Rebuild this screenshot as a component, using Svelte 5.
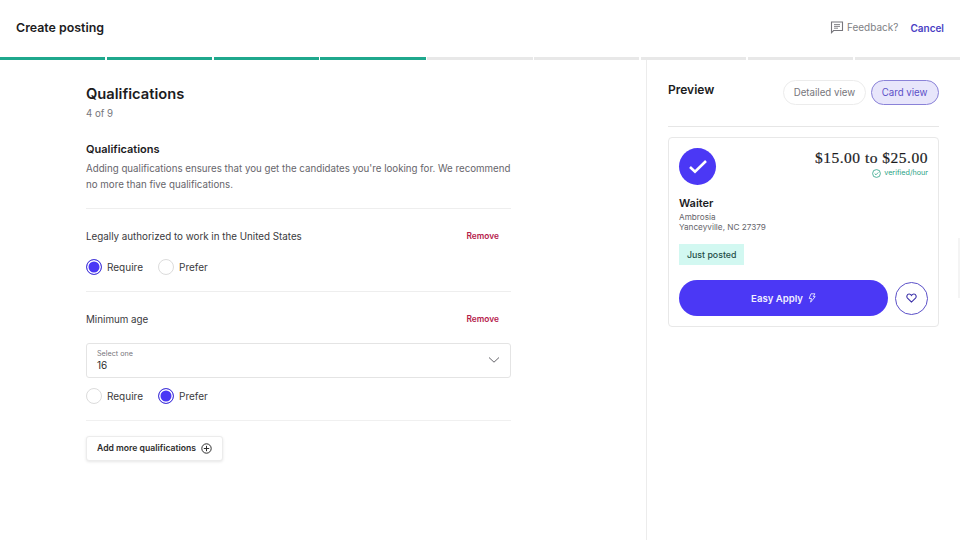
<script lang="ts">
  const segments = Array.from({ length: 9 }, (_, i) => i < 4);
</script>

<div class="page">
  <header class="topbar">
    <div class="title">Create posting</div>
    <div class="top-actions">
      <span class="feedback">
        <svg width="14" height="14" viewBox="0 0 14 14" fill="none" stroke="#77767c" stroke-width="1.1">
          <path d="M1.500 2h11v8.500H3.600L1.500 12.600z" />
          <path d="M4 4.600h6M4 6.400h6M4 8.200h4" stroke-width="0.9" />
        </svg>
        Feedback?
      </span>
      <span class="cancel">Cancel</span>
    </div>
  </header>

  <div class="progress">
    {#each segments as done}
      <div class="segment" class:done></div>
    {/each}
  </div>

  <div class="columns">
    <main class="form">
      <h1>Qualifications</h1>
      <div class="step">4 of 9</div>
      <h2>Qualifications</h2>
      <p class="intro">Adding qualifications ensures that you get the candidates you're looking for. We recommend no more than five qualifications.</p>

      <section class="qual first">
        <div class="qual-head">
          <span>Legally authorized to work in the United States</span>
          <span class="remove">Remove</span>
        </div>
        <div class="radios">
          <span class="radio-item"><span class="radio on"></span>Require</span>
          <span class="radio-item"><span class="radio"></span>Prefer</span>
        </div>
      </section>

      <section class="qual second">
        <div class="qual-head">
          <span>Minimum age</span>
          <span class="remove">Remove</span>
        </div>
        <div class="select">
          <div>
            <div class="select-label">Select one</div>
            <div class="select-value">16</div>
          </div>
          <svg width="12" height="12" viewBox="0 0 12 12" fill="none" stroke="#66656b" stroke-width="1">
            <path d="M1 3.500 6 8.200l5-4.700" />
          </svg>
        </div>
        <div class="radios">
          <span class="radio-item"><span class="radio"></span>Require</span>
          <span class="radio-item"><span class="radio on"></span>Prefer</span>
        </div>
      </section>

      <button class="add">
        Add more qualifications
        <svg width="11" height="11" viewBox="0 0 11 11" fill="none" stroke="#2d2d2d" stroke-width="1">
          <circle cx="5.500" cy="5.500" r="4.700" />
          <path d="M5.500 2.800v5.400M2.800 5.500h5.400" />
        </svg>
      </button>
    </main>

    <aside class="preview">
      <div class="preview-head">
        <div class="preview-title">Preview</div>
        <div class="views">
          <span class="view">Detailed view</span>
          <span class="view active">Card view</span>
        </div>
      </div>

      <div class="card">
        <div class="card-top">
          <div class="logo">
            <svg width="20" height="15" viewBox="0 0 20 15" fill="none" stroke="#fff" stroke-width="2.600">
              <path d="M2 8l5 4.600L18 2" />
            </svg>
          </div>
          <div class="pay">
            <div class="price">$15.00 to $25.00</div>
            <div class="verified">
              <svg width="9" height="9" viewBox="0 0 9 9" fill="none" stroke="#2aa285" stroke-width="0.800">
                <circle cx="4.500" cy="4.500" r="3.900" />
                <path d="M2.700 4.600l1.300 1.200 2.300-2.400" />
              </svg>
              verified/hour
            </div>
          </div>
        </div>
        <div class="job">Waiter</div>
        <div class="place">Ambrosia<br />Yanceyville, NC 27379</div>
        <div class="tag">Just posted</div>
        <div class="apply-row">
          <button class="apply">
            Easy Apply
            <svg width="8" height="10" viewBox="0 0 8 10" fill="none" stroke="#e8e6ff" stroke-width="0.900">
              <path d="M3 .8h4L5.200 3.600h2L2.600 9.200l.9-3.700H1.200z" />
            </svg>
          </button>
          <span class="save">
            <svg width="11" height="10" viewBox="0 0 11 10" fill="none" stroke="#3a2fa8" stroke-width="1.100">
              <path d="M5.500 9.100 1.500 5.200C.2 3.800.9 1 3.100 1c1.100 0 1.900.6 2.400 1.400C6 1.600 6.800 1 7.900 1c2.200 0 2.900 2.800 1.600 4.200z" />
            </svg>
          </span>
        </div>
      </div>
    </aside>
  </div>

  <div class="edge"></div>
</div>

<style>
  :global(body) {
    background: #fff;
  }

  .page {
    position: relative;
    width: 960px;
    height: 540px;
    overflow: hidden;
    font-family: Inter, "Liberation Sans", sans-serif;
    color: #2d2d2d;
    background: #fff;
  }

  .topbar {
    height: 57px;
    box-sizing: border-box;
    display: flex;
    justify-content: space-between;
    align-items: center;
    padding: 0 16px 2px;
  }

  .title {
    font-size: 12.400px;
    font-weight: 600;
    color: #1c1c1e;
  }

  .top-actions {
    display: flex;
    align-items: center;
    gap: 12px;
  }

  .feedback {
    display: flex;
    align-items: center;
    gap: 3px;
    margin-bottom: 1px;
    font-size: 10px;
    color: #807f85;
  }

  .cancel {
    font-size: 10px;
    font-weight: 600;
    color: #4a3fc4;
  }

  .progress {
    display: flex;
    gap: 1.500px;
    height: 3px;
  }

  .segment {
    flex: 1;
    background: #e8e8e8;
  }

  .segment.done {
    background: #1fa88d;
  }

  .columns {
    display: flex;
    height: 480px;
  }

  .form {
    width: 425px;
    padding: 24px 135px 0 86px;
    border-right: 1px solid #ececec;
  }

  h1 {
    margin: 0;
    font-size: 14.700px;
    line-height: 20px;
    font-weight: 600;
    color: #1c1c1e;
  }

  .step {
    margin-top: 3px;
    font-size: 9.700px;
    line-height: 14px;
    color: #77767c;
  }

  h2 {
    margin: 20px 0 0;
    font-size: 11px;
    line-height: 16px;
    font-weight: 600;
    color: #1c1c1e;
  }

  .intro {
    margin: 4px 0 0;
    font-size: 9.720px;
    line-height: 16px;
    color: #66656b;
  }

  .qual {
    box-sizing: border-box;
    border-top: 1px solid #eeeeee;
    padding-top: 21px;
  }

  .qual.first {
    margin-top: 15px;
    height: 83px;
  }

  .qual.second {
    height: 130px;
    border-bottom: 1px solid #f0f0f0;
  }

  .qual-head {
    display: flex;
    justify-content: space-between;
    padding-right: 12px;
    font-size: 9.800px;
    line-height: 14px;
    color: #3a3a3d;
  }

  .remove {
    font-size: 8.400px;
    line-height: 12px;
    font-weight: 600;
    color: #b5204a;
  }

  .radios {
    display: flex;
    gap: 15px;
    margin-top: 15px;
    font-size: 10px;
    color: #3a3a3d;
  }

  .select + .radios {
    margin-top: 10px;
  }

  .radio-item {
    display: flex;
    align-items: center;
    gap: 5px;
    height: 16px;
  }

  .radio {
    width: 14px;
    height: 14px;
    border: 1px solid #dcdcdc;
    border-radius: 50%;
    background: #fff;
  }

  .radio.on {
    border-color: #4b3fd8;
    background: #4b38f5;
    box-shadow: inset 0 0 0 1.500px #fff;
  }

  .select {
    display: flex;
    justify-content: space-between;
    align-items: center;
    height: 33px;
    margin-top: 16px;
    padding: 0 10px;
    border: 1px solid #e4e4e4;
    border-radius: 3px;
  }

  .select svg {
    margin-bottom: 2px;
  }

  .select-label {
    font-size: 7.200px;
    line-height: 10px;
    color: #77767c;
  }

  .select-value {
    font-size: 10px;
    line-height: 13px;
    color: #2d2d2d;
  }

  .add {
    display: flex;
    align-items: center;
    gap: 5px;
    height: 25px;
    margin-top: 15px;
    padding: 0 9.500px 1px 10px;
    font-family: inherit;
    font-size: 8.650px;
    font-weight: 600;
    color: #2d2d2d;
    background: #fff;
    border: 1px solid #ececec;
    border-radius: 3px;
    box-shadow: 0 1px 3px rgba(0, 0, 0, 0.1);
  }

  .preview {
    flex: 1;
    padding: 20px 21px 0;
    min-width: 0;
  }

  .preview-head {
    display: flex;
    justify-content: space-between;
    height: 46px;
    border-bottom: 1px solid #e6e6e6;
  }

  .preview-title {
    margin-top: 1px;
    font-size: 12px;
    line-height: 18px;
    font-weight: 600;
    color: #1c1c1e;
  }

  .views {
    display: flex;
    gap: 5px;
    height: 25px;
  }

  .view {
    display: flex;
    align-items: center;
    padding: 0 9.500px;
    font-size: 9.700px;
    color: #77767c;
    border: 1px solid #ececec;
    border-radius: 13px;
  }

  .view.active {
    padding: 0 10.500px 0 10px;
    color: #5b50c8;
    background: #e8e6fb;
    border-color: #8a82d8;
  }

  .card {
    margin-top: 10px;
    height: 190px;
    padding: 10px 10px 0;
    border: 1px solid #e8e8e8;
    border-radius: 4px;
    box-sizing: border-box;
  }

  .card-top {
    display: flex;
    justify-content: space-between;
  }

  .logo {
    display: flex;
    align-items: center;
    justify-content: center;
    width: 37px;
    height: 37px;
    border-radius: 50%;
    background: #4b38f5;
  }

  .pay {
    text-align: right;
  }

  .price {
    font-family: "Liberation Serif", serif;
    font-size: 15.500px;
    line-height: 20px;
    letter-spacing: 0.500px;
    -webkit-text-stroke: 0.200px #1c1c1e;
    color: #1c1c1e;
  }

  .verified {
    display: flex;
    justify-content: flex-end;
    align-items: center;
    gap: 3px;
    font-size: 7.200px;
    line-height: 10px;
    color: #2aa285;
  }

  .job {
    margin-top: 11px;
    font-size: 11px;
    line-height: 14px;
    font-weight: 600;
    color: #1c1c1e;
  }

  .place {
    margin-top: 2px;
    font-size: 8.200px;
    line-height: 10px;
    color: #66656b;
  }

  .tag {
    width: fit-content;
    margin-top: 12px;
    padding: 0 8px;
    font-size: 8.800px;
    line-height: 21px;
    font-weight: 500;
    color: #1f4f48;
    background: #d2f8f1;
  }

  .apply-row {
    display: flex;
    justify-content: space-between;
    align-items: center;
    margin-top: 15px;
  }

  .apply {
    display: flex;
    align-items: center;
    justify-content: center;
    gap: 5px;
    width: 209px;
    height: 36px;
    padding: 0;
    font-family: inherit;
    font-size: 9.600px;
    font-weight: 600;
    color: #f0efff;
    background: #4b38f5;
    border: none;
    border-radius: 18px;
  }

  .save {
    display: flex;
    align-items: center;
    justify-content: center;
    width: 31px;
    height: 31px;
    border: 1px solid #5b50c8;
    border-radius: 50%;
  }

  .edge {
    position: absolute;
    right: 0;
    top: 238px;
    width: 2px;
    height: 60px;
    background: #f4f4f4;
  }
</style>
